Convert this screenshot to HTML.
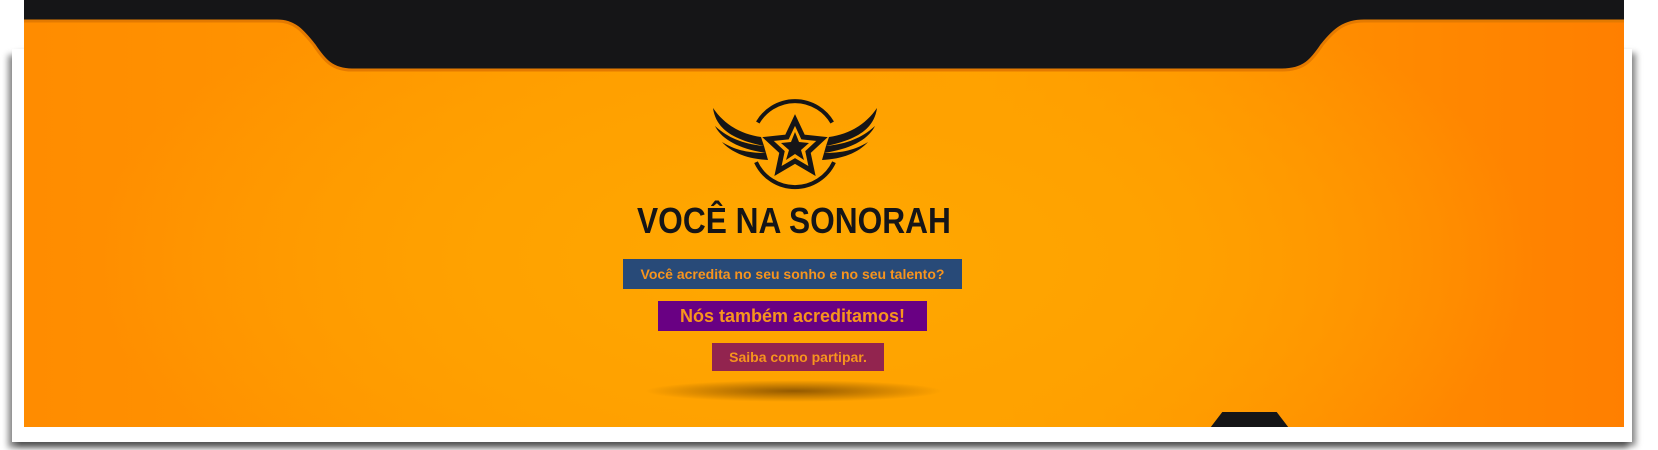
<!DOCTYPE html>
<html><head><meta charset="utf-8"><style>
html,body{margin:0;padding:0;background:#fff;width:1658px;height:450px;overflow:hidden;position:relative;font-family:"Liberation Sans",sans-serif}
.frame{position:absolute;left:12px;top:49px;width:1620px;height:393px;background:#fff;box-shadow:-4px 6px 6px rgba(0,0,0,.45),4px 4px 6px rgba(0,0,0,.45)}
.or{position:absolute;left:24px;top:0;width:1600px;height:427px;overflow:hidden;
background:radial-gradient(ellipse 720px 330px at 790px 260px,#ffa800 0%,#ffa200 45%,rgba(255,150,0,0) 100%),linear-gradient(90deg,#ff8c00 0%,#ff9a00 35%,#ffa000 60%,#ff8a00 85%,#ff7f00 100%)}
.box{position:absolute;color:#f7941d;font-weight:bold;text-align:center;white-space:nowrap}
</style></head><body>
<div class="frame"></div>
<div class="or">
<svg width="1600" height="80" style="position:absolute;left:0;top:0">
<path d="M-5 -5 H1605 V21 H1340 C1320 21 1310 30 1298 45 C1288 60 1280 70 1258 70 H328 C308 70 300 60 290 45 C278 30 270 21 253 21 H-5 Z" fill="#151517" stroke="#e47a00" stroke-width="3"/>
</svg>
<div style="position:absolute;left:1183px;top:412px;width:85px;height:20px;background:#151517;clip-path:polygon(0 100%,18% 0,82% 0,100% 100%);border-radius:8px 8px 0 0"></div>
<div style="position:absolute;left:620px;top:380px;width:300px;height:22px;border-radius:50%;background:radial-gradient(ellipse at center,rgba(60,30,0,.55),rgba(60,30,0,0) 70%)"></div>
<svg width="180" height="115" viewBox="0 0 180 115" style="position:absolute;left:676px;top:90px">
<g fill="none" stroke="#151517" stroke-width="4">
<path d="M57.8 32.5 A43 43 0 0 1 132.2 32.5"/>
<path d="M134 72.2 A43 43 0 0 1 56 72.2"/>
<path d="M95 30 L103 47 L122 49 L108 62 L112 81 L95 71 L78 81 L82 62 L68 49 L87 47 Z" stroke-width="5"/>
</g>
<path d="M95 42 L99 52 L109 53 L101 60 L104 70 L95 64 L86 70 L89 60 L81 53 L91 52 Z" fill="#151517"/>
<g fill="#151517">
<path d="M13 18 C16 40 35 50 64 56 L61 47 C40 44 24 34 13 18 Z"/>
<path d="M15 36 C22 50 40 59 66 63 L64 56 C42 54 27 47 15 36 Z"/>
<path d="M22 52 C32 63 48 69 68 70 L66 63 C48 63 35 60 22 52 Z"/>
<path d="M177 18 C174 40 155 50 126 56 L129 47 C150 44 166 34 177 18 Z"/>
<path d="M175 36 C168 50 150 59 124 63 L126 56 C148 54 163 47 175 36 Z"/>
<path d="M168 52 C158 63 142 69 122 70 L124 63 C142 63 155 60 168 52 Z"/>
</g>
</svg>
<div style="position:absolute;left:570px;top:200px;width:400px;text-align:center;font-weight:bold;font-size:36px;color:#151517;white-space:nowrap;transform:scaleX(.88)">VOCÊ NA SONORAH</div>
<div class="box" style="left:599px;top:259px;width:339px;height:30px;line-height:30px;background:#284a78;font-size:14px">Você acredita no seu sonho e no seu talento?</div>
<div class="box" style="left:634px;top:301px;width:269px;height:30px;line-height:30px;background:#690083;font-size:18px">Nós também acreditamos!</div>
<div class="box" style="left:688px;top:343px;width:172px;height:28px;line-height:28px;background:#92244f;font-size:14px">Saiba como partipar.</div>
</div>
</body></html>
